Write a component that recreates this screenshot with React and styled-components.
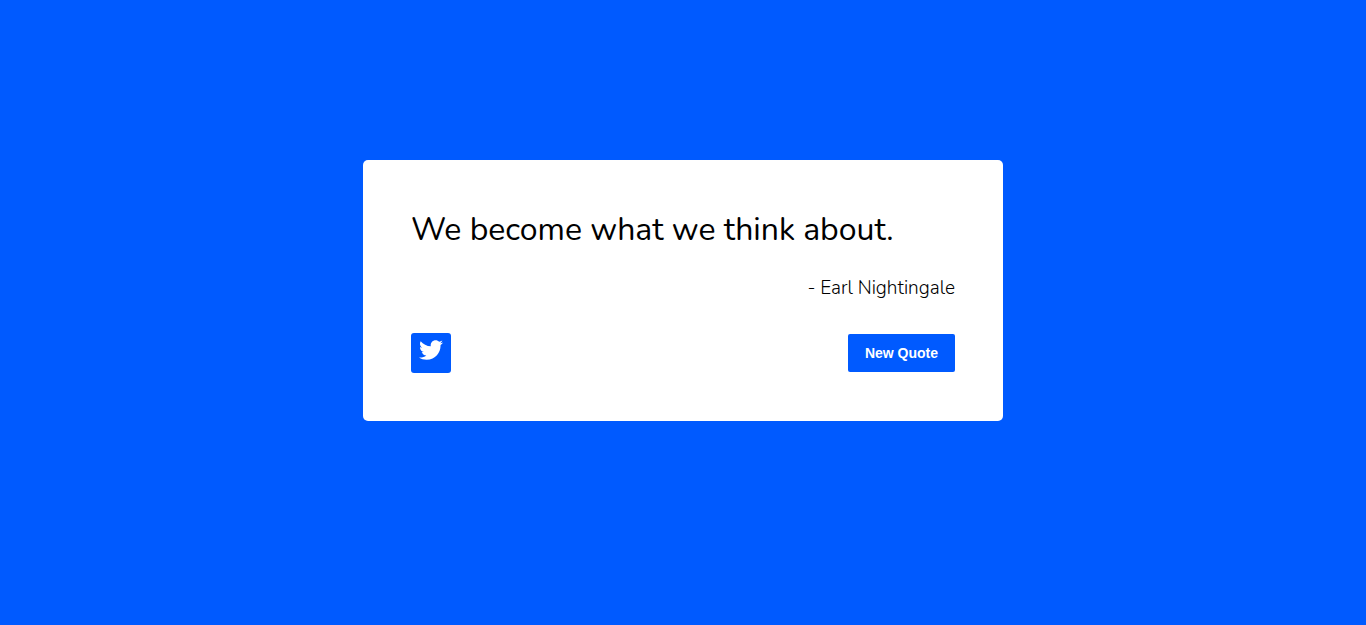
import React, { useState } from "react";
import styled, { createGlobalStyle } from "styled-components";
import { FaTwitter } from "react-icons/fa";

const blue = "#005aff";

const GlobalStyle = createGlobalStyle`
  *, *::before, *::after { box-sizing: border-box; }
  body {
    margin: 0;
    background: ${blue};
    color: #000;
    font-family: Nunito, Lato, sans-serif;
  }
`;

const Page = styled.main`
  display: flex;
  align-items: center;
  justify-content: center;
  min-height: 100vh;
  padding: 16px 16px 60px;
`;

const Card = styled.section`
  width: 100%;
  max-width: 640px;
  padding: 48px;
  border-radius: 5px;
  background: #fff;
`;

const Quote = styled.p`
  margin: 0;
  font-size: 32px;
  font-weight: 400;
  line-height: 44px;
`;

const Author = styled.p`
  margin: 23px 0 32px;
  font-size: 19px;
  font-weight: 300;
  line-height: 26px;
  text-align: right;
`;

const Actions = styled.div`
  display: flex;
  align-items: center;
  justify-content: space-between;
`;

const TweetLink = styled.a`
  display: flex;
  justify-content: center;
  width: 40px;
  height: 40px;
  padding-top: 5px;
  border-radius: 3px;
  background: ${blue};
  color: #fff;
  font-size: 24px;
`;

const Button = styled.button`
  padding: 11px 17px;
  border: 0;
  border-radius: 2px;
  background: ${blue};
  color: #fff;
  font-family: "Liberation Sans", Arial, sans-serif;
  font-size: 14px;
  font-weight: 700;
  line-height: 16px;
  cursor: pointer;
`;

const quotes = [
  { text: "We become what we think about.", author: "Earl Nightingale" },
];

export default function App() {
  const [index, setIndex] = useState(0);
  const quote = quotes[index];
  const tweet = encodeURIComponent(`${quote.text} - ${quote.author}`);

  return (
    <>
      <GlobalStyle />
      <Page>
        <Card>
          <Quote>{quote.text}</Quote>
          <Author>- {quote.author}</Author>
          <Actions>
            <TweetLink href={`https://twitter.com/intent/tweet?text=${tweet}`} aria-label="Tweet">
              <FaTwitter aria-hidden="true" />
            </TweetLink>
            <Button type="button" onClick={() => setIndex((index + 1) % quotes.length)}>
              New Quote
            </Button>
          </Actions>
        </Card>
      </Page>
    </>
  );
}
